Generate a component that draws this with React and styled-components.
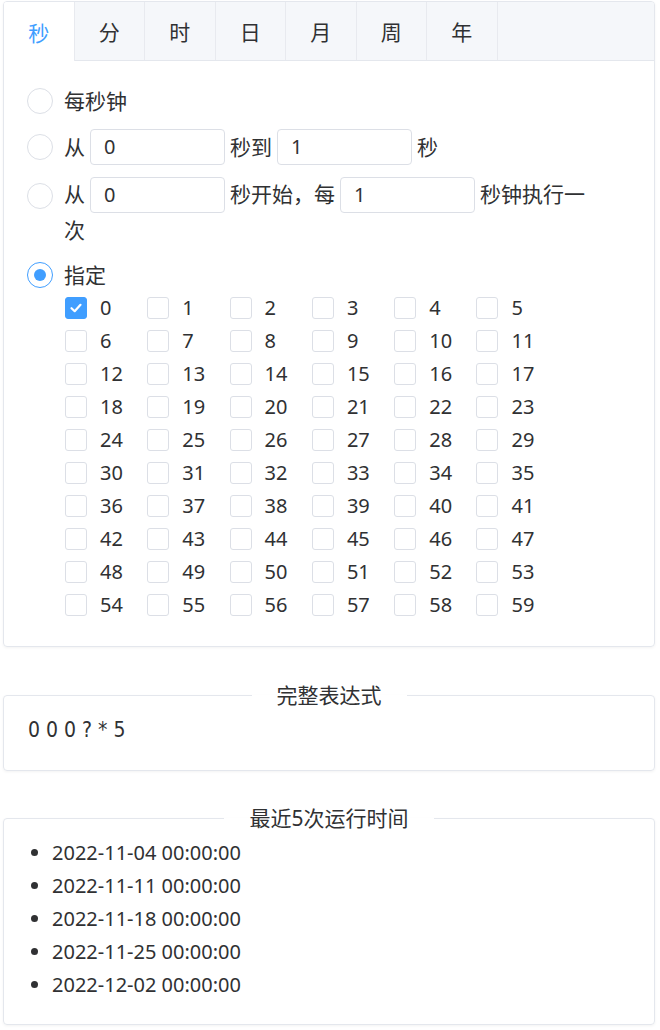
import React from 'react';
import styled, { createGlobalStyle } from 'styled-components';

const GlobalStyle = createGlobalStyle`
  body {
    margin: 0;
    background: #fff;
    font-family: "Noto Sans", "Noto Sans CJK SC", sans-serif;
    color: #303133;
  }
`;

const Page = styled.div`
  width: 652px;
  padding: 1px 0 6px 3px;
`;

// Tabs card
const TabsCard = styled.div`
  border: 1px solid #e4e7ed;
  border-radius: 4px;
  box-shadow: 0 1px 3px rgba(0, 0, 0, 0.05);
  overflow: hidden;
`;

const TabBar = styled.div`
  display: flex;
  height: 58px;
  background: #f5f7fa;
  border-bottom: 1px solid #e4e7ed;
`;

const Tab = styled.div`
  flex: 0 0 70.5px;
  box-sizing: border-box;
  display: flex;
  align-items: center;
  justify-content: center;
  font-size: 21px;
  border-right: 1px solid #e8eaef;
  color: ${(p) => (p.$active ? '#409eff' : '#303133')};
  background: ${(p) => (p.$active ? '#fff' : 'transparent')};
  height: ${(p) => (p.$active ? '59px' : '58px')};
`;

const TabBody = styled.div`
  padding: 22px 20px 25px 23px;
  display: flex;
  flex-direction: column;
`;

const Row = styled.div`
  display: flex;
  align-items: ${(p) => (p.$top ? 'flex-start' : 'center')};
  min-height: ${(p) => p.$h || 36}px;
  margin-top: ${(p) => p.$mt || 0}px;
`;

const Radio = styled.span`
  flex: 0 0 auto;
  box-sizing: border-box;
  width: 26px;
  height: 26px;
  border-radius: 50%;
  border: 1px solid ${(p) => (p.$checked ? '#409eff' : '#dcdfe6')};
  display: flex;
  align-items: center;
  justify-content: center;
  margin-top: ${(p) => (p.$top ? 6 : 0)}px;
  &::after {
    content: '';
    width: 12px;
    height: 12px;
    border-radius: 50%;
    background: ${(p) => (p.$checked ? '#409eff' : 'transparent')};
  }
`;

const Label = styled.div`
  margin-left: 11px;
  font-size: 21px;
  line-height: ${(p) => p.$lh || 36}px;
  color: #303133;
  max-width: 534px;
`;

const NumInput = styled.span`
  display: inline-block;
  box-sizing: border-box;
  width: 135px;
  height: 36px;
  margin: 0 5px;
  padding-left: 13px;
  border: 1px solid #dcdfe6;
  border-radius: 4px;
  font-size: 20px;
  line-height: 34px;
  color: #303133;
  vertical-align: top;
`;

const CheckGrid = styled.div`
  display: grid;
  grid-template-columns: repeat(6, 82.3px);
  grid-auto-rows: 33px;
  margin: -2px 0 0 38px;
`;

const CheckItem = styled.label`
  display: flex;
  align-items: center;
  font-size: 20px;
  color: #303133;
`;

const Box = styled.span`
  box-sizing: border-box;
  width: 22px;
  height: 22px;
  border-radius: 3px;
  border: 1px solid ${(p) => (p.$checked ? '#409eff' : '#dcdfe6')};
  background: ${(p) => (p.$checked ? '#409eff' : '#fff')};
  display: flex;
  align-items: center;
  justify-content: center;
  margin-right: 13px;
`;

// Fieldsets
const Panel = styled.fieldset`
  margin: ${(p) => p.$mt}px 0 0 0;
  border: 1px solid #e4e7ed;
  border-radius: 4px;
  box-shadow: 0 1px 3px rgba(0, 0, 0, 0.05);
  padding: ${(p) => p.$pt}px 24px ${(p) => p.$pb}px 24px;
  min-width: 0;
`;

const Legend = styled.legend`
  margin: 0 auto;
  padding: 0 25px;
  font-size: 21px;
  line-height: 31px;
  color: #303133;
`;

const Expr = styled.div`
  font-family: "Liberation Sans Narrow", "DejaVu Sans Condensed", "Noto Sans", sans-serif;
  font-size: 21px;
  line-height: 32px;
  color: #303133;
`;

const List = styled.ul`
  margin: 0;
  padding-left: 24px;
`;

const Item = styled.li`
  font-size: 20px;
  line-height: 33px;
  color: #303133;
`;

const tabs = ['秒', '分', '时', '日', '月', '周', '年'];
const runs = [
  '2022-11-04 00:00:00',
  '2022-11-11 00:00:00',
  '2022-11-18 00:00:00',
  '2022-11-25 00:00:00',
  '2022-12-02 00:00:00',
];

const Check = () => (
  <svg width="14" height="14" viewBox="0 0 14 14">
    <path d="M2.5 7.2 L5.7 10.2 L11.5 3.8" fill="none" stroke="#fff" strokeWidth="2.2" strokeLinecap="round" strokeLinejoin="round" />
  </svg>
);

export default function App() {
  const seconds = Array.from({ length: 60 }, (_, i) => i);
  return (
    <Page>
      <GlobalStyle />
      <TabsCard>
        <TabBar>
          {tabs.map((t, i) => (
            <Tab key={t} $active={i === 0}>{t}</Tab>
          ))}
        </TabBar>
        <TabBody>
          <Row>
            <Radio />
            <Label>每秒钟</Label>
          </Row>
          <Row $mt={10}>
            <Radio />
            <Label>
              从<NumInput>0</NumInput>秒到<NumInput>1</NumInput>秒
            </Label>
          </Row>
          <Row $mt={12} $top>
            <Radio $top />
            <Label $lh={34}>
              从<NumInput>0</NumInput>秒开始，每<NumInput>1</NumInput>秒钟执行一次
            </Label>
          </Row>
          <Row $mt={10} $h={30}>
            <Radio $checked />
            <Label>指定</Label>
          </Row>
          <CheckGrid>
            {seconds.map((n) => (
              <CheckItem key={n}>
                <Box $checked={n === 0}>{n === 0 && <Check />}</Box>
                {n}
              </CheckItem>
            ))}
          </CheckGrid>
        </TabBody>
      </TabsCard>

      <Panel $mt={33} $pt={3} $pb={24}>
        <Legend>完整表达式</Legend>
        <Expr>0 0 0 ? * 5</Expr>
      </Panel>

      <Panel $mt={32} $pt={2} $pb={23}>
        <Legend>最近5次运行时间</Legend>
        <List>
          {runs.map((r) => (
            <Item key={r}>{r}</Item>
          ))}
        </List>
      </Panel>
    </Page>
  );
}
